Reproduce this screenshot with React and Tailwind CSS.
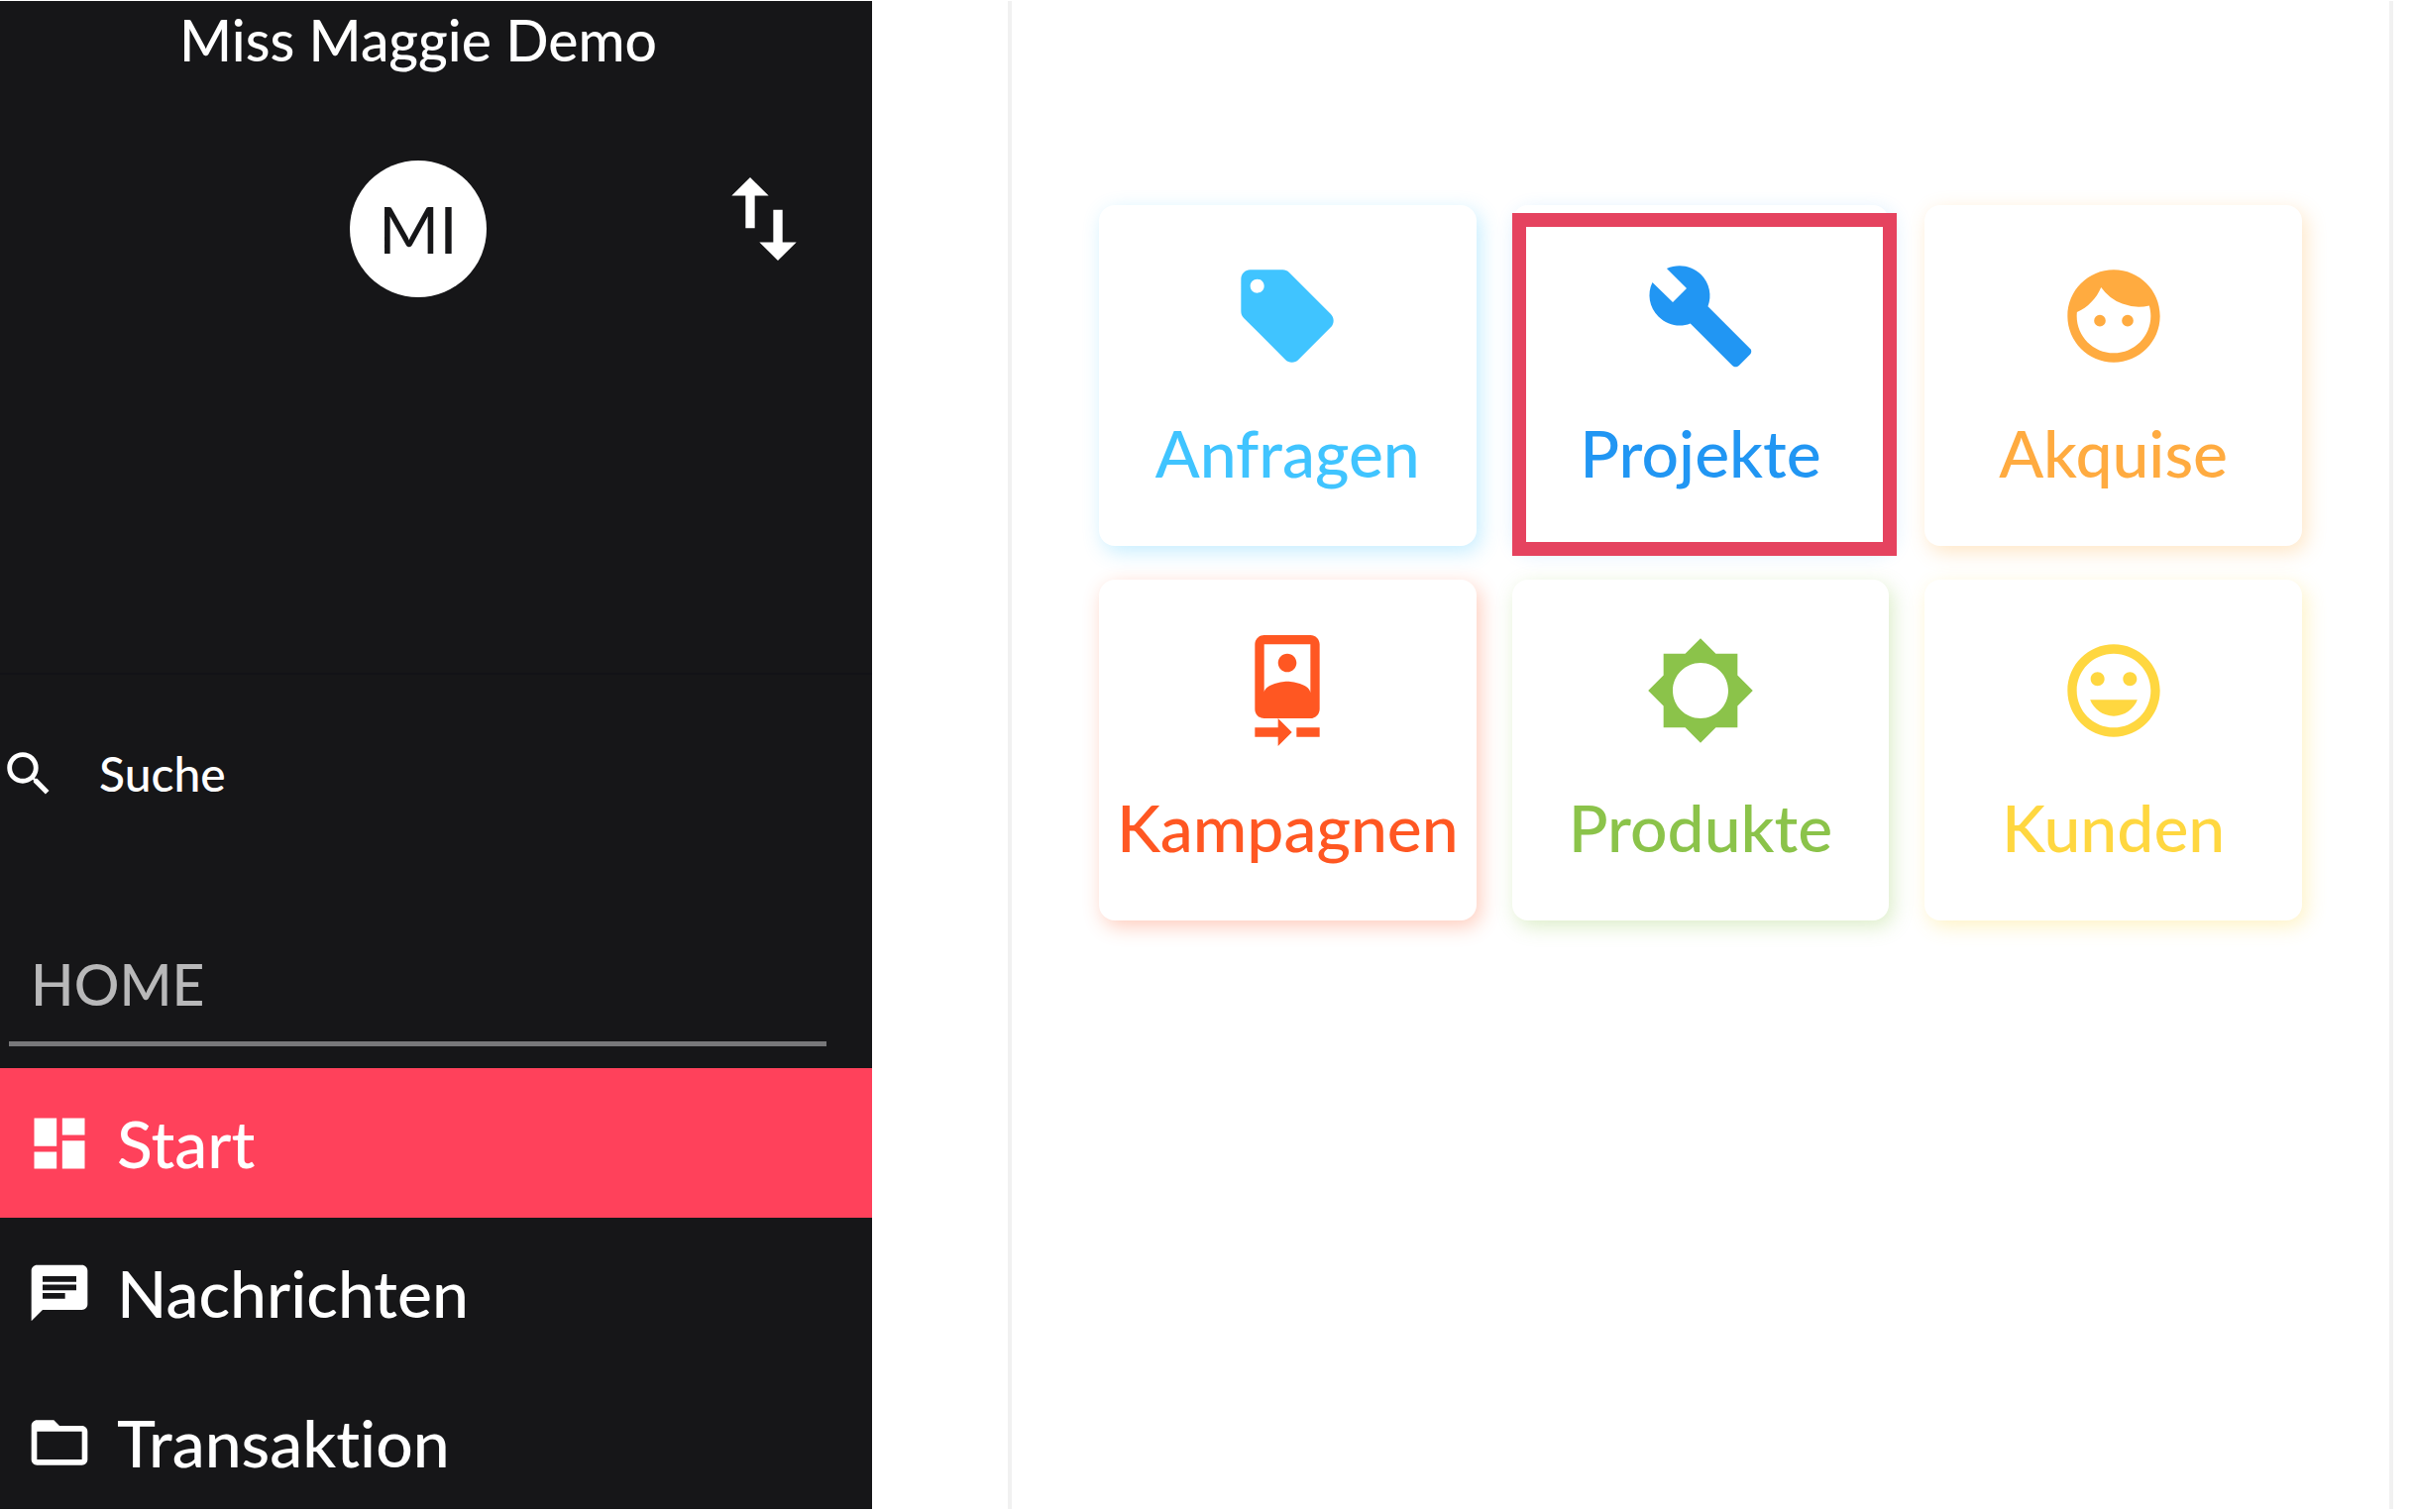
import clsx from 'clsx';
import {
  MdBrightnessLow,
  MdBuild,
  MdCameraFront,
  MdChat,
  MdDashboard,
  MdFace,
  MdFolderOpen,
  MdImportExport,
  MdInsertEmoticon,
  MdLocalOffer,
  MdSearch,
} from 'react-icons/md';

const menu = [
  { label: 'Start', icon: MdDashboard, active: true },
  { label: 'Nachrichten', icon: MdChat },
  { label: 'Transaktion', icon: MdFolderOpen },
];

const tiles = [
  { label: 'Anfragen', icon: MdLocalOffer, style: 'text-[#40c4ff] shadow-[4px_6px_20px_#40c4ff4d]' },
  { label: 'Projekte', icon: MdBuild, style: 'text-[#2196f3] shadow-[4px_6px_20px_#2196f333]', marked: true },
  { label: 'Akquise', icon: MdFace, style: 'text-[#ffab40] shadow-[4px_6px_20px_#ffab404d]' },
  { label: 'Kampagnen', icon: MdCameraFront, style: 'text-[#ff5722] shadow-[4px_6px_20px_#ff57224d]' },
  { label: 'Produkte', icon: MdBrightnessLow, style: 'text-[#8bc34a] shadow-[4px_6px_20px_#8bc34a4d]' },
  { label: 'Kunden', icon: MdInsertEmoticon, style: 'text-[#ffd740] shadow-[4px_6px_20px_#ffd7404d]' },
];

function Sidebar() {
  return (
    <aside className="w-[880px] shrink-0 overflow-hidden bg-[#161618] text-white">
      <header className="h-[680px] border-b-2 border-[#121217] pr-9">
        <h1 className="pt-[3px] text-center text-[57px] leading-[72px] font-medium">Miss Maggie Demo</h1>
        <div className="mt-[86px] grid grid-cols-3 items-start">
          <div className="col-start-2 flex size-[138px] items-center justify-center justify-self-center rounded-full bg-white text-[66px] leading-[80px] text-[#161618]">
            MI
          </div>
          <button type="button" aria-label="Konto wechseln" className="mt-[3px] mr-[17px] justify-self-end">
            <MdImportExport className="size-[112px]" />
          </button>
        </div>
      </header>

      <label className="mt-[70px] flex h-[60px] items-center gap-[42px]">
        <MdSearch className="size-[58px] shrink-0" />
        <input
          type="search"
          placeholder="Suche"
          aria-label="Suche"
          className="w-full bg-transparent text-[48px] leading-[60px] font-medium outline-none placeholder:text-white placeholder:opacity-100"
        />
      </label>

      <h2 className="mt-[146px] mr-[46px] mb-[22px] ml-[9px] border-b-[5px] border-[#78787a] pb-[22px] pl-[22px] text-[57px] leading-[72px] font-medium text-[#b8b8b9]">
        HOME
      </h2>

      <nav>
        {menu.map(({ label, icon: Icon, active }) => (
          <a
            key={label}
            href="#"
            className={clsx('flex h-[151px] items-center gap-6 pl-[26px] text-[66px] leading-[80px] font-medium', active && 'bg-[#ff415b]')}
          >
            <Icon className="size-[68px]" />
            {label}
          </a>
        ))}
      </nav>
    </aside>
  );
}

function Tile({ label, icon: Icon, style, marked }) {
  return (
    <button type="button" className={clsx('relative flex h-[344px] flex-col items-center rounded-2xl bg-white pt-14', style)}>
      <Icon className="size-[112px]" />
      <span className="mt-[42px] text-[66px] leading-[80px] font-medium">{label}</span>
      {marked && <span className="absolute top-2 -right-2 -bottom-2.5 left-0 border-[14px] border-[#e5435f]" />}
    </button>
  );
}

export default function App() {
  return (
    <div className="flex h-screen overflow-hidden bg-white pt-px pb-[3px] font-['Lato',sans-serif] [font-variant-ligatures:none]">
      <Sidebar />
      <main className="mr-[23px] ml-[137px] flex-1 border-x-4 border-[#f1f1f1] px-[88px] pt-[206px]">
        <div className="grid grid-cols-3 gap-x-9 gap-y-[34px]">
          {tiles.map((tile) => <Tile key={tile.label} {...tile} />)}
        </div>
      </main>
    </div>
  );
}
